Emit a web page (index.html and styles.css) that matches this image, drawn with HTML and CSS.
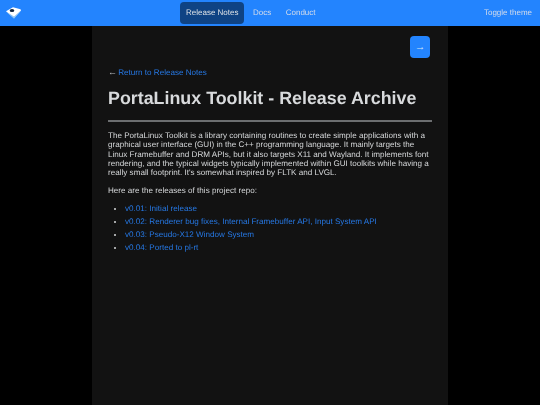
FILE: index.html
```html
<!DOCTYPE html>
<html lang="en">
<head>
<meta charset="utf-8">
<title>PortaLinux Toolkit - Release Archive</title>
<link rel="stylesheet" href="styles.css">
</head>
<body>
<header class="navbar">
  <a class="logo" href="#" aria-label="Home">
    <svg width="18" height="14" viewBox="0 0 18 14">
      <path d="M1 5.2 L8 1.2 L15.5 3.2 L16 4.5 L9 12 Z" fill="#fff"/>
      <path d="M1 5.4 L9 12.8 L16 4.6 L9 10.6 Z" fill="#8cc4f5"/>
      <ellipse cx="7" cy="4.6" rx="2.3" ry="1.5" fill="#10233c"/>
    </svg>
  </a>
  <nav class="links">
    <a class="link active" href="#">Release Notes</a>
    <a class="link" href="#">Docs</a>
    <a class="link" href="#">Conduct</a>
  </nav>
  <a class="toggle" href="#">Toggle theme</a>
</header>
<main class="page">
  <div class="next-row"><a class="next" href="#">→</a></div>
  <p class="back"><span class="arrow">←</span> <a href="#">Return to Release Notes</a></p>
  <h1>PortaLinux Toolkit - Release Archive</h1>
  <hr>
  <p>The PortaLinux Toolkit is a library containing routines to create simple applications with a graphical user interface (GUI) in the C++ programming language. It mainly targets the Linux Framebuffer and DRM APIs, but it also targets X11 and Wayland. It implements font rendering, and the typical widgets typically implemented within GUI toolkits while having a really small footprint. It's somewhat inspired by FLTK and LVGL.</p>
  <p>Here are the releases of this project repo:</p>
  <ul>
    <li><a href="#">v0.01: Initial release</a></li>
    <li><a href="#">v0.02: Renderer bug fixes, Internal Framebuffer API, Input System API</a></li>
    <li><a href="#">v0.03: Pseudo-X12 Window System</a></li>
    <li><a href="#">v0.04: Ported to pl-rt</a></li>
  </ul>
</main>
</body>
</html>
```
FILE: styles.css
```css
html, body {
  margin: 0;
  height: 100%;
  background: #000;
}
body {
  font-family: "Liberation Sans", Arial, sans-serif;
  font-size: 8.1px;
  line-height: 9.35px;
  color: #d6d8da;
  display: flex;
  flex-direction: column;
  overflow: hidden;
  text-rendering: geometricPrecision;
}
a {
  color: #2678e4;
  text-decoration: none;
}
.navbar {
  flex: none;
  height: 26px;
  padding: 0 8px 0 5px;
  background: #2384fe;
  display: flex;
  align-items: center;
}
.logo {
  line-height: 0;
}
.links {
  display: flex;
  gap: 2.5px;
  margin-left: 157px;
  font-size: 8px;
}
.link {
  color: #d4dcea;
  padding: 6.5px 6px 7px;
  border-radius: 4px;
  filter: blur(0.2px);
}
.link.active {
  background: #0f4384;
  color: #dee2e6;
}
.toggle {
  margin-left: auto;
  color: #d4dcea;
  font-size: 8px;
  filter: blur(0.2px);
}
.page {
  flex: 1;
  width: 324px;
  margin: 0 auto;
  padding: 10px 16px 0;
  background: #121212;
}
.next-row {
  display: flex;
  justify-content: flex-end;
  margin-right: 2px;
}
.next {
  display: flex;
  align-items: center;
  justify-content: center;
  width: 20px;
  height: 21px;
  padding-top: 1px;
  border-radius: 4px;
  background: #2384fe;
  color: #d5e4f8;
  font-size: 10.5px;
}
.back {
  margin: 10px 0 0;
  filter: blur(0.2px);
}
.arrow {
  color: #b8bcc0;
  font-size: 9px;
  letter-spacing: -1px;
}
h1 {
  margin: 10px 0 0;
  font-size: 17.85px;
  line-height: 23px;
  font-weight: 700;
  color: #d8dadc;
  filter: blur(0.2px);
}
hr {
  height: 2px;
  margin: 10px 0 0;
  border: 0;
  background: #6c6e70;
}
p {
  margin: 8px 0 0;
  filter: blur(0.2px);
}
hr + p {
  margin-top: 8.5px;
}
ul {
  margin: 9.5px 0 0;
  padding-left: 17px;
  filter: blur(0.2px);
}
li {
  padding-bottom: 3.65px;
}
```
